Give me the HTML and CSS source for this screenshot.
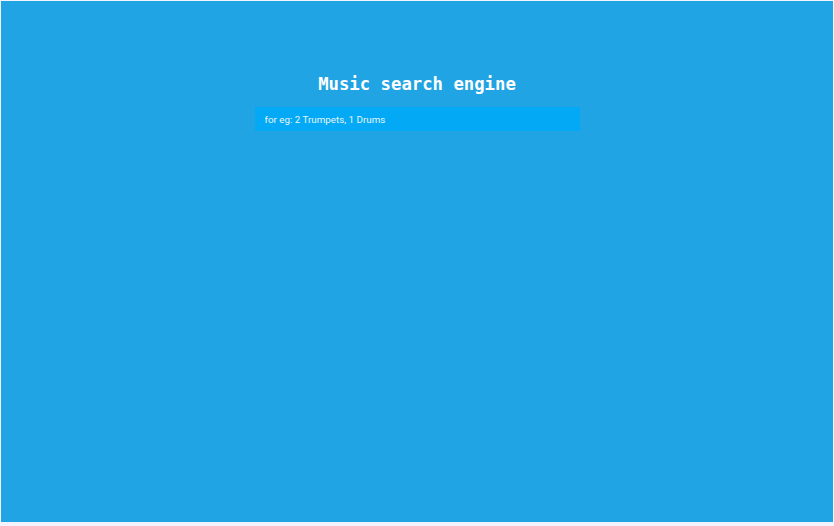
FILE: index.html
```html
<!DOCTYPE html>
<html>
<head>
<meta charset="utf-8">
<link rel="stylesheet" href="styles.css">
</head>
<body>
<div class="app">
  <h1 class="title">Music search engine</h1>
  <input class="search" type="text" placeholder="for eg: 2 Trumpets, 1 Drums">
</div>
</body>
</html>
```
FILE: styles.css
```css
html, body {
  margin: 0;
  padding: 0;
  background: #f4f2fb;
}
.app {
  margin: 1px 1px 4px 1px;
  height: 521px;
  background: #21a4e3;
  display: flex;
  flex-direction: column;
  align-items: center;
  padding-top: 71px;
  box-sizing: border-box;
}
.title {
  margin: 0;
  font-family: "DejaVu Sans Mono", "Liberation Mono", monospace;
  font-weight: bold;
  font-size: 17.3px;
  line-height: 24px;
  color: #ffffff;
}
.search {
  margin-top: 11px;
  width: 325px;
  height: 24px;
  box-sizing: border-box;
  border: none;
  outline: none;
  background: #03a9f4;
  padding: 0 10px;
  font-family: Roboto, "Noto Sans", sans-serif;
  font-size: 9.8px;
  color: #ffffff;
}
.search::placeholder {
  color: #e6f5fd;
  opacity: 1;
}
```
